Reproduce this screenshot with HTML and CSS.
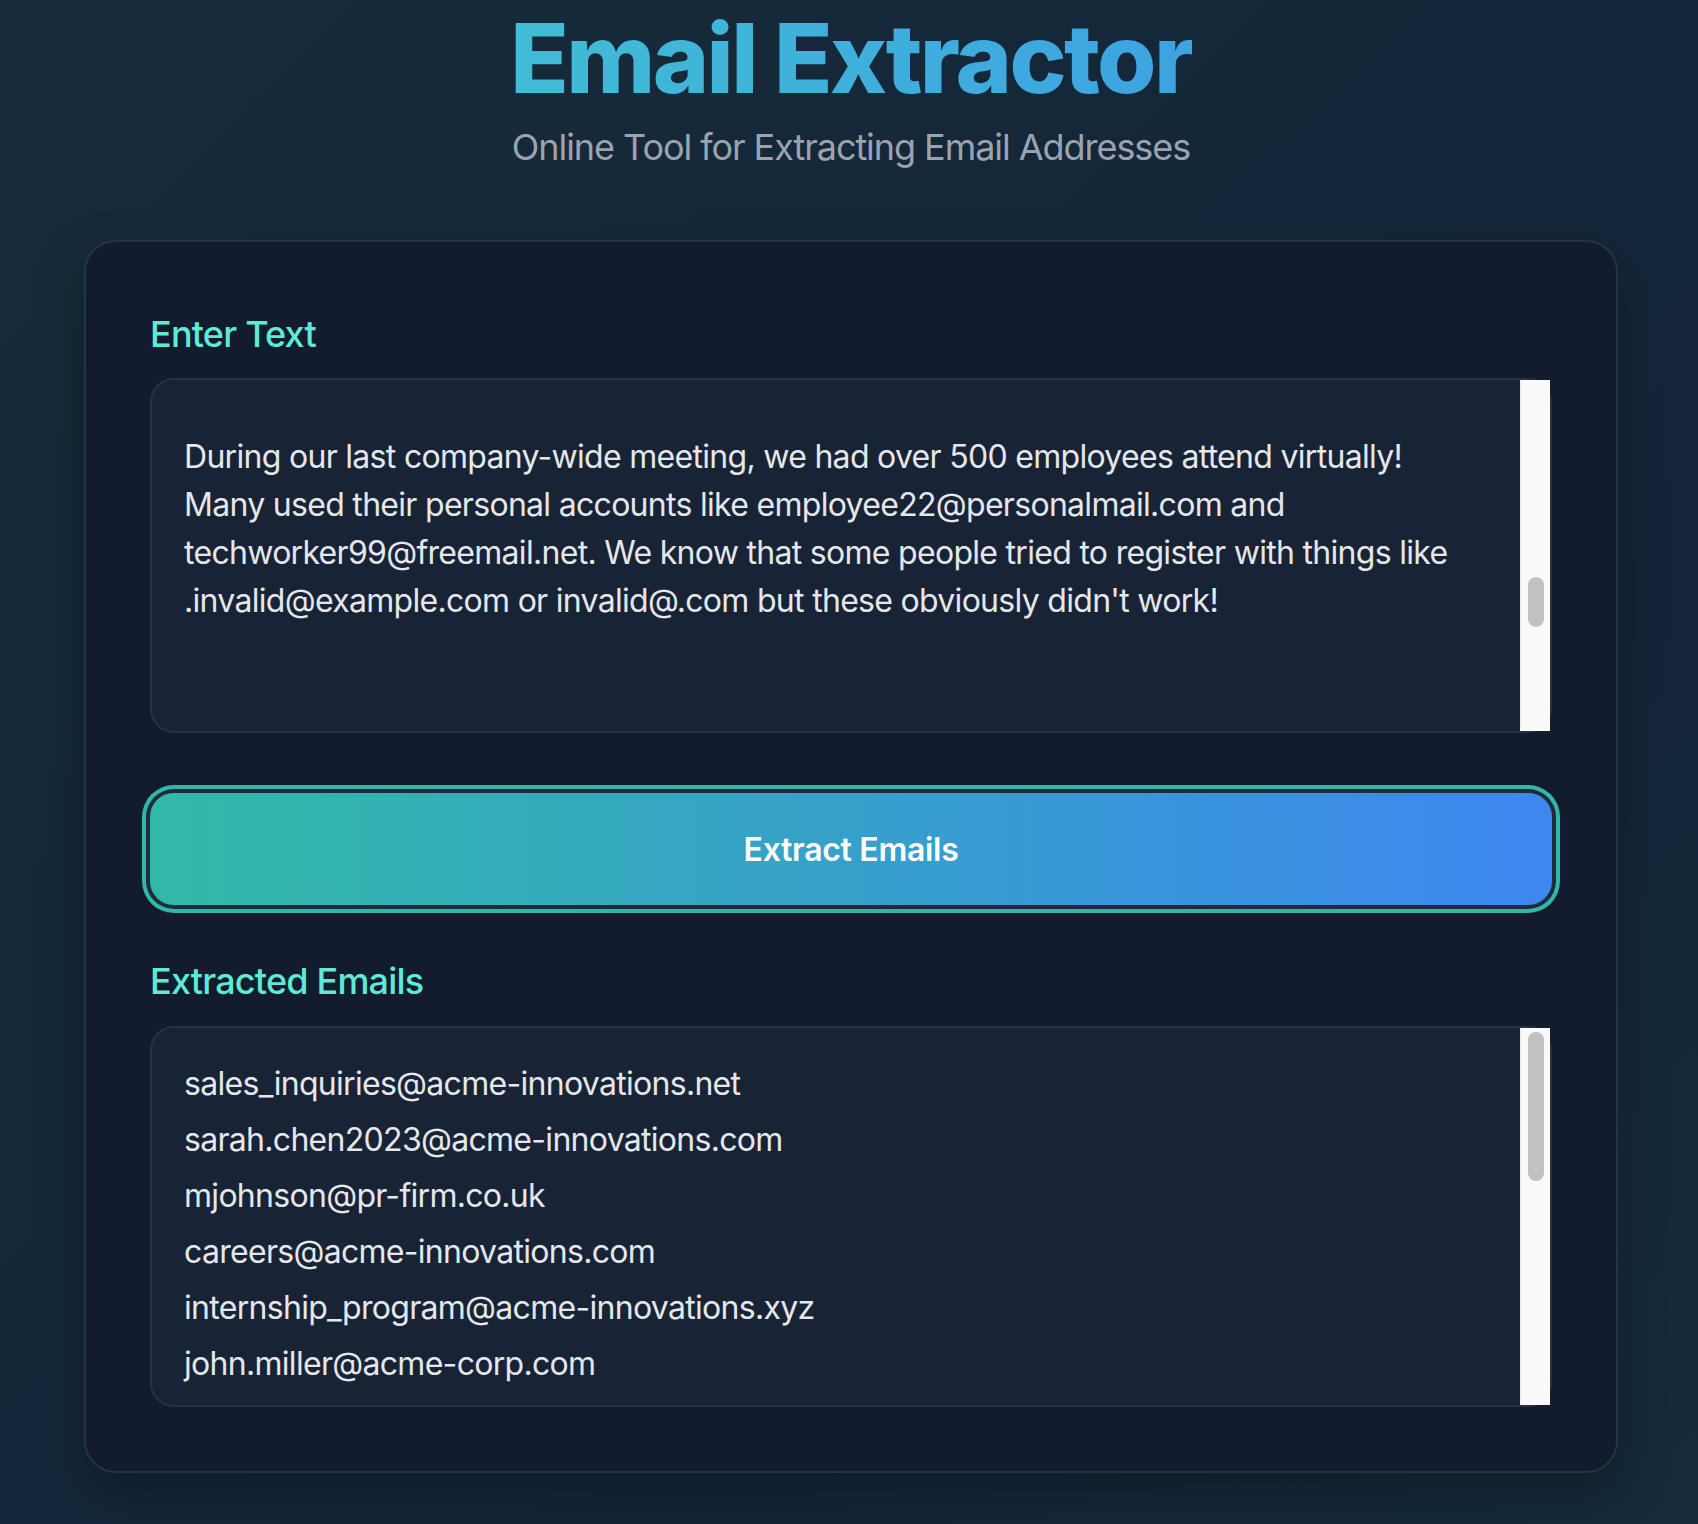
FILE: index.html
```html
<!DOCTYPE html>
<html lang="en">
<head>
<meta charset="utf-8">
<title>Email Extractor</title>
<link rel="stylesheet" href="styles.css">
</head>
<body>
<div class="page">
  <header class="header">
    <h1 class="title"><span class="title-text">Email Extractor</span></h1>
    <p class="subtitle">Online Tool for Extracting Email Addresses</p>
  </header>
  <main class="card">
    <label class="label">Enter Text</label>
    <div class="box box-input">
      <div class="box-text input-text">During our last company-wide meeting, we had over 500 employees attend virtually!
Many used their personal accounts like employee22@personalmail.com and
techworker99@freemail.net. We know that some people tried to register with things like
.invalid@example.com or invalid@.com but these obviously didn't work!</div>
      <div class="track"><div class="thumb thumb-input"></div></div>
    </div>
    <button class="extract-btn" type="button">Extract Emails</button>
    <label class="label label-results">Extracted Emails</label>
    <div class="box box-results">
      <div class="box-text results-list">
        <div class="email">sales_inquiries@acme-innovations.net</div>
        <div class="email">sarah.chen2023@acme-innovations.com</div>
        <div class="email">mjohnson@pr-firm.co.uk</div>
        <div class="email">careers@acme-innovations.com</div>
        <div class="email">internship_program@acme-innovations.xyz</div>
        <div class="email">john.miller@acme-corp.com</div>
        <div class="email">hr.team@acme-innovations.com</div>
      </div>
      <div class="track"><div class="thumb thumb-results"></div></div>
    </div>
  </main>
</div>
</body>
</html>
```

FILE: styles.css
```css
html, body {
  margin: 0;
  padding: 0;
}

body {
  min-height: 100vh;
  background: linear-gradient(135deg, #162b39 0%, #14273a 45%, #142539 70%, #152a3a 100%);
  font-family: Inter, "Noto Sans", "Liberation Sans", sans-serif;
  color: #e5e7eb;
}

.page {
  padding: 11px 80px 50px 84px;
  display: flex;
  flex-direction: column;
}

.header {
  display: flex;
  flex-direction: column;
  align-items: center;
}

.title {
  margin: 0;
  font-size: 96px;
  line-height: 94px;
  font-weight: 800;
  letter-spacing: -2.6px;
}

.title-text {
  display: inline-block;
  background: linear-gradient(90deg, #41bcd5 0%, #3da3e1 100%);
  -webkit-background-clip: text;
  background-clip: text;
  color: transparent;
}

.subtitle {
  margin: 14px 0 65px;
  font-size: 36px;
  line-height: 56px;
  letter-spacing: -1.05px;
  color: #9ca3af;
}

.card {
  display: flex;
  flex-direction: column;
  background: #121c2e;
  border: 2px solid #273243;
  border-radius: 32px;
  padding: 64px;
  box-shadow: 0 20px 50px rgba(0, 0, 0, 0.25);
}

.label {
  display: block;
  font-size: 36px;
  line-height: 56px;
  font-weight: 500;
  letter-spacing: -0.8px;
  color: #5eead4;
  margin-bottom: 16px;
}

.label-results {
  margin-top: 48px;
  margin-bottom: 17px;
}

.box {
  display: flex;
  flex: none;
  box-sizing: border-box;
  background: #182435;
  border: 2px solid #263244;
  border-radius: 24px;
}

.box-input {
  height: 355px;
}

.box-results {
  height: 381px;
}

.box-text {
  flex: 1;
  min-width: 0;
  overflow: hidden;
  font-size: 32px;
  line-height: 48px;
  letter-spacing: -0.7px;
  color: #e5e7eb;
}

.input-text {
  padding: 53px 32px 0 32px;
  white-space: pre;
}

.results-list {
  padding: 32px 32px 0 32px;
  display: flex;
  flex-direction: column;
  gap: 8px;
}

.email {
  white-space: nowrap;
}

.track {
  width: 29px;
  flex: none;
  background: #fafafa;
  border-left: 1px solid #ebebeb;
  display: flex;
  flex-direction: column;
  align-items: flex-start;
}

.thumb {
  width: 16px;
  margin-left: 7px;
  background: #c1c1c1;
  border-radius: 8px;
}

.thumb-input {
  margin-top: 197px;
  height: 50px;
}

.thumb-results {
  margin-top: 4px;
  height: 149px;
}

.extract-btn {
  flex: none;
  margin-top: 60px;
  height: 112px;
  width: 100%;
  border: none;
  border-radius: 24px;
  background: linear-gradient(90deg, #31b9a6 0%, #3d87f0 100%);
  box-shadow: 0 0 0 4px #1f2a3c, 0 0 0 8px #2fb8a6;
  font-family: Inter, "Noto Sans", "Liberation Sans", sans-serif;
  font-size: 32px;
  font-weight: 600;
  letter-spacing: -0.3px;
  color: #ffffff;
  cursor: pointer;
}
```
